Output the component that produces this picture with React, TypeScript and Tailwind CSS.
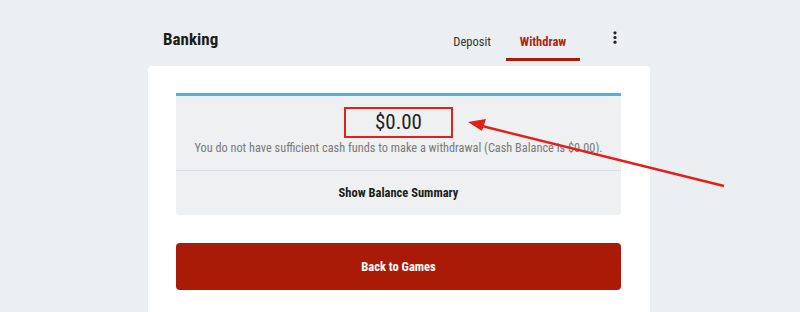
import React from 'react';

const font = { fontFamily: '"Roboto Condensed", "Liberation Sans Narrow", Roboto, sans-serif' };

export default function App() {
  return (
    <div className="relative w-[800px] h-[312px] overflow-hidden bg-[#eceff1]" style={font}>
      <div className="mx-auto w-[502px] translate-x-[-1px]">
        {/* Header */}
        <div className="flex items-end h-[66px]">
          <h1 className="pl-[15px] pb-[14px] text-[17px] font-bold text-[#1c1c1c]">Banking</h1>
          <div className="ml-auto flex items-end mb-[5px]">
            <button className="px-[15px] pb-[8px] leading-[16px] text-[12.5px] text-[#333] border-b-[3px] border-transparent">
              Deposit
            </button>
            <button className="w-[74px] pb-[8px] leading-[16px] text-[12.5px] font-bold text-[#b31e10] border-b-[3px] border-[#a81c0e]">
              Withdraw
            </button>
            <div className="w-[70px] flex justify-center pb-[17px]">
              <svg width="4" height="13" viewBox="0 0 4 13">
                <circle cx="2" cy="1.8" r="1.6" fill="#222" />
                <circle cx="2" cy="6.5" r="1.6" fill="#222" />
                <circle cx="2" cy="11.2" r="1.6" fill="#222" />
              </svg>
            </div>
          </div>
        </div>

        {/* Card */}
        <div className="bg-white rounded-t-[4px] h-[260px] pt-[27px] pl-[28px] pr-[29px]">
          <div className="bg-[#eef0f2] border-t-[3px] border-[#4bb4dc] rounded-b-[3px]">
            <div className="flex flex-col items-center pt-[11px] pb-[13px]">
              <div className="w-[109px] h-[31px] border-2 border-[#e3201c] flex items-center justify-center text-[21px] text-[#222]">
                $0.00
              </div>
              <p className="mt-[1px] text-[12.3px] text-[#7a7a7a]">
                You do not have sufficient cash funds to make a withdrawal (Cash Balance is $0.00).
              </p>
            </div>
            <div className="border-t border-[#dcdfe2] h-[45px] flex items-center justify-center text-[12.5px] font-bold text-[#1c1c1c]">
              Show Balance Summary
            </div>
          </div>
          <button className="mt-[28px] w-full h-[47px] rounded-[4px] bg-[#a91b07] text-white text-[12.5px] font-bold">
            Back to Games
          </button>
        </div>
      </div>

      {/* annotation arrow */}
      <svg className="absolute left-0 top-0" width="800" height="312" viewBox="0 0 800 312">
        <line x1="724" y1="186" x2="482" y2="126" stroke="#e0211b" strokeWidth="2.5" />
        <polygon points="468,122 486,119 482,131" fill="#e0211b" />
      </svg>
    </div>
  );
}
